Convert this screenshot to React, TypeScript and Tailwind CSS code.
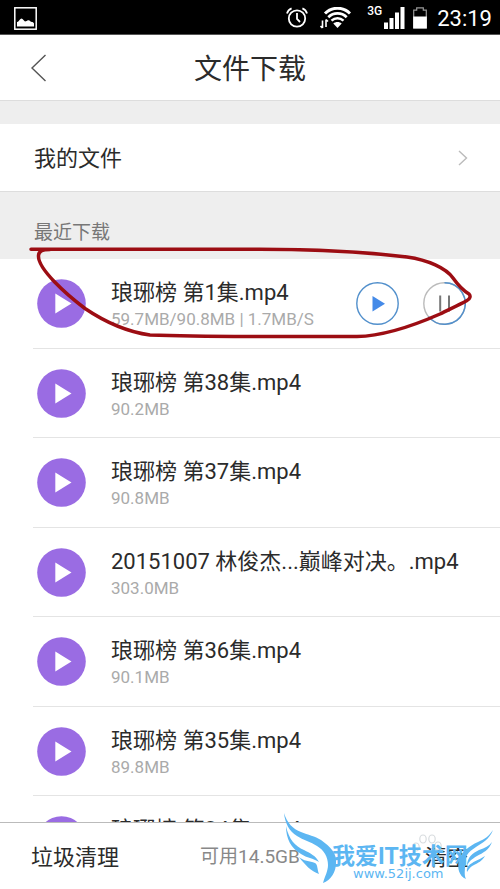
import { useState } from "react";

type DownloadItem = {
  id: number;
  name: string;
  info: string;
  downloading?: boolean;
};

const downloads: DownloadItem[] = [
  { id: 1, name: "琅琊榜 第1集.mp4", info: "59.7MB/90.8MB | 1.7MB/S", downloading: true },
  { id: 2, name: "琅琊榜 第38集.mp4", info: "90.2MB" },
  { id: 3, name: "琅琊榜 第37集.mp4", info: "90.8MB" },
  { id: 4, name: "20151007 林俊杰...巅峰对决。.mp4", info: "303.0MB" },
  { id: 5, name: "琅琊榜 第36集.mp4", info: "90.1MB" },
  { id: 6, name: "琅琊榜 第35集.mp4", info: "89.8MB" },
  { id: 7, name: "琅琊榜 第34集.mp4", info: "90.4MB" },
];

function StatusBar() {
  return (
    <div className="flex h-[35px] shrink-0 items-center border-b border-[#555] bg-black pt-0.5 pr-2 pl-3.5 text-white">
      <svg width="23" height="23" viewBox="0 0 23 23" fill="none">
        <rect x="0.8" y="0.8" width="21.4" height="21.4" stroke="#fff" strokeWidth="1.5" />
        <path d="M3 19.5V15c1.5 0 2-1.5 3.5-3 .7-.7 1.3-.7 2 0l2.5 2.5c1.5 0 2-1.5 3.5-1.3 1.5 0 2 1.8 3.5 1.8.8 0 1.500.5 2 1.5v3z" fill="#fff" />
      </svg>

      <div className="ml-auto flex items-center">
        {/* Alarm */}
        <svg width="22" height="22" viewBox="0 0 22 22" fill="none" stroke="#fff" strokeWidth="1.8">
          <circle cx="11" cy="11.5" r="8.2" />
          <path d="M11 6v6l3 3M1 6.5C1.6 4 3.3 2.2 5.6 1.3M21 6.5C20.4 4 18.7 2.2 16.4 1.3" />
        </svg>
        {/* Wifi */}
        <svg className="ml-3" width="31" height="22" viewBox="0 0 31 22" fill="none" stroke="#fff">
          <path d="M5 6.5C12-.5 23-.5 30 6.5" strokeWidth="3" />
          <path d="M8.3 10.2c5.2-5 13.2-5 18.4 0" strokeWidth="2.7" />
          <path d="M11.5 13.7c3.4-3.2 8.6-3.2 12 0" strokeWidth="2.5" />
          <path d="M17.5 21l-4.2-4.5c2.3-2 6.1-2 8.4 0z" fill="#fff" stroke="none" />
          <path d="M2.5 21v-7.5M2.5 21l-2-2M6 12.5V20M6 12.5l2 2" strokeWidth="1.6" />
        </svg>
        {/* Signal */}
        <span className="ml-4 self-start text-xs leading-3 font-medium">3G</span>
        <svg className="ml-0.5" width="21" height="22" viewBox="0 0 21 22" fill="#fff">
          <path d="M0 15.5h4V22H0zM5.5 11h4v11h-4zM11 5.5h4V22h-4zM16.5 0h4v22h-4z" />
        </svg>
        {/* Battery */}
        <svg className="ml-2" width="14" height="22" viewBox="0 0 14 22" fill="none">
          <path d="M.7 21V3.2h3V.8h6.6v2.4h3V21z" stroke="#999" strokeWidth="1.2" />
          <path d="M.2 9.5h13.6v12H.2z" fill="#fff" />
        </svg>
        <span className="ml-2.5 pt-0.5 text-[22px] leading-6">23:19</span>
      </div>
    </div>
  );
}

function PlayBadge() {
  return (
    <svg className="ml-1 shrink-0" width="49" height="49" viewBox="0 0 49 49">
      <circle cx="24.5" cy="24.5" r="24.3" fill="#9a6ce3" />
      <path d="M18.3 14.5l16.2 10-16.2 10z" fill="#fff" />
    </svg>
  );
}

function DownloadRow({ item }: { item: DownloadItem }) {
  const [paused, setPaused] = useState(false);

  return (
    <li className="ml-[33px] flex shrink-0 items-center border-b border-[#e4e4e4] odd:h-[90px] even:h-[89px]">
      <PlayBadge />
      <div className="ml-[25px] min-w-0 flex-1 pt-[3px]">
        <p className="truncate text-[22px] leading-7">{item.name}</p>
        <p className="text-[17px] leading-6 whitespace-nowrap text-[#aaa]">{item.info}</p>
      </div>
      {item.downloading && (
        <div className="mr-[34px] flex gap-6">
          <button type="button" aria-label="播放">
            <svg width="43" height="43" viewBox="0 0 43 43">
              <circle cx="21.5" cy="21.5" r="20.7" fill="none" stroke="#5290cc" strokeWidth="1.4" />
              <path d="M16.5 14v15.5L29 21.7z" fill="#448ae8" />
            </svg>
          </button>
          <button type="button" aria-label="暂停" aria-pressed={paused} onClick={() => setPaused(!paused)}>
            <svg width="43" height="43" viewBox="0 0 43 43" fill="none">
              <circle cx="21.5" cy="21.5" r="20.7" stroke="#bbb" strokeWidth="1.4" />
              <path d="M21.5 0.8a20.7 20.7 0 1 1-16 33.8" stroke="#5290cc" strokeWidth="1.4" />
              <path d="M17.2 13.5v16M26 13.5v16" stroke="#777" strokeWidth="2" />
            </svg>
          </button>
        </div>
      )}
    </li>
  );
}

function RedMark() {
  return (
    <svg className="pointer-events-none absolute top-0 left-0 w-full" viewBox="0 191 500 157" fill="none">
      <path
        d="M31 248.3H250C310 248 365 251 407 256C428 259 446 267 453 277C458 284 464 290 469 293C471 295 470 298 467 299.5C459 304 450 308 440 313C415 324 385 335 357 335.5H250C210 335.3 180 335 150 334C128 331 105 321 85 307.5C66 293 38 268 38.5 255C38.5 250 42 248.5 50 248.5"
        stroke="#9c0d13"
        strokeWidth="3.5"
        strokeLinecap="round"
        strokeLinejoin="round"
      />
    </svg>
  );
}

function Watermark() {
  return (
    <div className="pointer-events-none absolute right-1.5 bottom-0.5 h-[76px] w-[212px] text-[#5cb6f2]">
      <svg className="absolute inset-0" width="212" height="76" viewBox="282 811 212 76" fill="currentColor">
        {/* Paw */}
        <g fill="#fff" stroke="#d8dcdf" strokeWidth="1.2">
          <ellipse cx="416" cy="847" rx="3.2" ry="4" />
          <ellipse cx="423" cy="839" rx="3.2" ry="4" />
          <ellipse cx="432" cy="839" rx="3.2" ry="4" />
          <ellipse cx="438" cy="846" rx="3.2" ry="4" />
        </g>
        {/* Left wing */}
        <path d="M284 813C287 823 293 829 301 832C308 835 315 836 321 840C331 847 337 854 336 863C336 872 331 880 323 883C325 876 328 871 328 865C328 857 324 850 317 846C311 842 303 840 297 836C289 831 285 823 284 813z" />
        <path d="M286 826C289 840 295 846 304 850C310 853 316 856 319 862C313 858 307 858 301 854C291 848 286 839 286 826z" />
        <path d="M299 857C303 861 310 861 315 863C318 865 317 869 319 874C311 871 305 865 299 857z" />
        {/* Right wing */}
        <path d="M493 830C489 840 482 843 476 847C468 852 464 857 465 866C465 871 464 875 466 879C459 876 457 868 459 861C461 852 469 846 478 842C485 839 489 836 493 830z" />
        <path d="M492 842C489 850 483 853 477 856C472 859 469 861 467 866C467 857 473 853 479 850C485 848 489 846 492 842z" />
        <path d="M485 856C482 861 478 863 474 865C470 867 469 869 467 872C466 863 476 862 485 856z" />
      </svg>
      <p className="absolute top-8 left-[50px] text-[23px] leading-7 font-bold whitespace-nowrap">我爱IT技术网</p>
      <p className="absolute top-[55px] left-[71px] font-['DejaVu_Sans'] text-[13px] leading-4">www.52ij.com</p>
    </div>
  );
}

export default function App() {
  return (
    <div className="relative flex h-screen flex-col overflow-hidden bg-white font-[Roboto,'Noto_Sans_CJK_SC',sans-serif] text-[#2b2b2b]">
      <StatusBar />

      <header className="flex h-[66px] shrink-0 items-center border-b border-[#ddd] px-[30px]">
        <button type="button" aria-label="返回">
          <svg width="17" height="28" viewBox="0 0 17 28" fill="none" stroke="#555" strokeWidth="1.4">
            <path d="M15.5 1L2 14l13.5 13" />
          </svg>
        </button>
        <h1 className="flex-1 pt-1 pr-[17px] text-center text-[28px] leading-9">文件下载</h1>
      </header>

      <main className="flex min-h-0 flex-1 flex-col overflow-hidden bg-[#eee] pt-[23px]">
        <a href="#files" className="flex h-[68px] shrink-0 items-center justify-between border-b border-[#ddd] bg-white pr-8 pl-[34px] text-[22px]">
          <span className="pt-0.5">我的文件</span>
          <svg width="10" height="16" viewBox="0 0 10 16" fill="none" stroke="#bbb" strokeWidth="1.4">
            <path d="M1 1l7.5 7L1 15" />
          </svg>
        </a>

        <section className="relative">
          <h2 className="flex h-[67px] items-end pb-3 pl-[34px] text-[19px] leading-7 text-[#777]">最近下载</h2>
          <ul className="flex flex-col bg-white">
            {downloads.map((item) => (
              <DownloadRow key={item.id} item={item} />
            ))}
          </ul>
          <RedMark />
        </section>
      </main>

      <footer className="grid h-[67px] shrink-0 grid-cols-3 items-center border-t border-[#bbb] bg-white px-[31px] pt-0.5 text-[22px]">
        <button type="button" className="justify-self-start">垃圾清理</button>
        <span className="justify-self-center text-[19px] text-[#888]">可用14.5GB</span>
        <button type="button" className="justify-self-end">清空</button>
      </footer>

      <Watermark />
    </div>
  );
}
